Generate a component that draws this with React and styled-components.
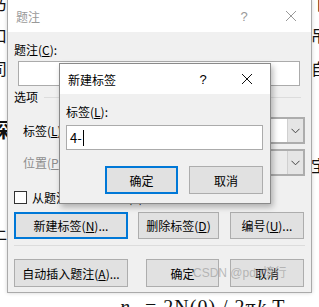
import React from "react";
import styled, { createGlobalStyle } from "styled-components";

const GlobalStyle = createGlobalStyle`
  html, body {
    margin: 0;
    padding: 0;
    background: #ffffff;
    overflow: hidden;
  }
  * {
    box-sizing: border-box;
  }
`;

const UI_FONT = `"Noto Sans CJK SC", "Microsoft YaHei", sans-serif`;

const Page = styled.div`
  position: relative;
  width: 319px;
  height: 307px;
  overflow: hidden;
  background: #ffffff;
`;

/* document behind the dialogs: only the edges peek out */
const Doc = styled.div`
  display: flex;
  flex-direction: column;
  width: 336px;
  margin: -7px 0 0 -9px;
  font-family: "Noto Sans CJK SC", serif;
  color: #111;
`;

const DocLine = styled.div`
  flex: none;
  display: flex;
  justify-content: space-between;
  height: ${(p) => p.$h}px;
  margin-top: ${(p) => p.$mt || 0}px;
  font-size: ${(p) => p.$size || 16}px;
  font-weight: ${(p) => (p.$bold ? 700 : 400)};
  line-height: ${(p) => p.$h}px;
  white-space: nowrap;
`;

const MathLine = styled.div`
  margin: 54px 0 0 129px;
  font-family: "Liberation Serif", serif;
  font-size: 20px;
  line-height: 22px;
  white-space: nowrap;
  letter-spacing: 1px;
`;

/* dialog pieces */
const Window = styled.div`
  position: absolute;
  z-index: ${(p) => p.$z};
  left: ${(p) => p.$left}px;
  top: ${(p) => p.$top}px;
  width: ${(p) => p.$w}px;
  height: ${(p) => p.$h}px;
  display: flex;
  flex-direction: column;
  background: #f0f0f0;
  border: 1px solid ${(p) => (p.$active ? "#8a8a8a" : "#aaaaaa")};
  box-shadow: ${(p) =>
    p.$active ? "2px 3px 6px rgba(0,0,0,0.28)" : "0 0 4px rgba(0,0,0,0.18)"};
  font-family: ${UI_FONT};
  font-size: 12px;
  color: #000;
`;

const TitleBar = styled.div`
  height: ${(p) => p.$h}px;
  flex: none;
  display: flex;
  align-items: center;
  background: #ffffff;
  padding-left: 8px;
  color: ${(p) => (p.$active ? "#000" : "#999")};
`;

const TitleText = styled.div`
  flex: 1;
  font-size: 12px;
`;

const TitleButton = styled.div`
  width: ${(p) => p.$w}px;
  margin-right: ${(p) => p.$mr || 0}px;
  display: flex;
  justify-content: center;
  align-items: center;
  font-family: "Liberation Sans", sans-serif;
  font-size: 13px;
`;

const Body = styled.div`
  flex: 1;
  display: flex;
  flex-direction: column;
  padding: 0 6px;
`;

const Label = styled.div`
  height: 16px;
  line-height: 16px;
  margin-top: ${(p) => p.$mt || 0}px;
  color: ${(p) => (p.$disabled ? "#8d8d8d" : "#000")};
  white-space: nowrap;
`;

const Underline = styled.span`
  text-decoration: underline;
`;

const TextBox = styled.div`
  height: 25px;
  margin: ${(p) => p.$m};
  flex: none;
  display: flex;
  align-items: center;
  padding-left: 3px;
  background: #ffffff;
  border: 1px solid #ababab;
  font-size: 13px;
`;

const Caret = styled.span`
  display: inline-block;
  width: 1px;
  height: 16px;
  background: #000;
  margin-left: 1px;
`;

const SectionRow = styled.div`
  display: flex;
  align-items: center;
  margin-top: 3px;
  height: 16px;
`;

const Rule = styled.div`
  flex: ${(p) => (p.$grow ? 1 : "none")};
  height: 1px;
  background: #dcdcdc;
  margin: ${(p) => p.$m || "0"};
`;

const FieldRow = styled.div`
  display: flex;
  align-items: center;
  height: 27px;
  margin-top: ${(p) => p.$mt}px;
`;

const FieldLabel = styled.div`
  width: 61px;
  padding-left: 9px;
  color: ${(p) => (p.$disabled ? "#8d8d8d" : "#000")};
`;

const Combo = styled.div`
  flex: 1;
  height: 27px;
  display: flex;
  border: 2px solid #adadad;
  background: ${(p) => (p.$disabled ? "#ececec" : "#ffffff")};
`;

const ComboField = styled.div`
  flex: 1;
`;

const ComboButton = styled.div`
  width: 16px;
  display: flex;
  align-items: center;
  justify-content: center;
  background: #e5e5e5;
  border-left: 1px solid #d0d0d0;
`;

const CheckRow = styled.div`
  display: flex;
  align-items: center;
  height: 13px;
  margin-top: 15px;
  gap: 5px;
`;

const CheckBox = styled.div`
  width: 13px;
  height: 13px;
  background: #fff;
  border: 1px solid #333;
`;

const ButtonRow = styled.div`
  display: flex;
  margin-top: ${(p) => p.$mt}px;
  margin-left: ${(p) => p.$ml || 0}px;
  height: ${(p) => p.$h}px;
`;

const Button = styled.div`
  width: ${(p) => p.$w}px;
  margin-left: ${(p) => p.$ml || 0}px;
  display: flex;
  align-items: center;
  justify-content: center;
  background: #e1e1e1;
  border: ${(p) => (p.$default ? "2px solid #0078d7" : "1px solid #adadad")};
  white-space: nowrap;
  font-size: 12px;
`;

const Watermark = styled.div`
  position: absolute;
  z-index: 3;
  left: 193px;
  top: 266px;
  font-family: "Liberation Sans", "Noto Sans CJK SC", sans-serif;
  font-size: 12px;
  line-height: 14px;
  color: rgba(160, 160, 160, 0.7);
  white-space: nowrap;
`;

const Chevron = () => (
  <svg width="9" height="6" viewBox="0 0 9 6">
    <path d="M0.5 0.8 L4.5 4.8 L8.5 0.8" fill="none" stroke="#444" strokeWidth="1" />
  </svg>
);

const CloseIcon = ({ color }) => (
  <svg width="12" height="12" viewBox="0 0 12 12">
    <path d="M1 1 L11 11 M11 1 L1 11" stroke={color} strokeWidth="1" />
  </svg>
);

const docLines = [
  { h: 20, mt: 0, left: "乃", right: "丨" },
  { h: 20, mt: 12, left: "口", right: "吊" },
  { h: 20, mt: 13, left: "司", right: "自" },
  { h: 26, mt: 39, left: "深", right: "", size: 20, bold: true },
  { h: 16, mt: 14, left: "", right: "宝" },
  { h: 16, mt: 2, left: "<", right: "" },
  { h: 20, mt: 31, left: "上", right: "" },
];

export default function App() {
  return (
    <Page>
      <GlobalStyle />
      <Doc>
        {docLines.map((l, i) => (
          <DocLine key={i} $h={l.h} $mt={l.mt} $size={l.size} $bold={l.bold}>
            <span>{l.left}</span>
            <span>{l.right}</span>
          </DocLine>
        ))}
        <MathLine>
          <i>n</i>₋ = 2N(0) / 2π<i>k</i> T
        </MathLine>
      </Doc>

      <Window $z={1} $left={7} $top={-1} $w={305} $h={294}>
        <TitleBar $h={32}>
          <TitleText>题注</TitleText>
          <TitleButton $w={20} $mr={17}>?</TitleButton>
          <TitleButton $w={40}>
            <CloseIcon color="#999" />
          </TitleButton>
        </TitleBar>
        <Body>
          <Label $mt={10}>
            题注(<Underline>C</Underline>):
          </Label>
          <TextBox $m="3px 5px 0 4px" />
          <SectionRow>
            <Label>选项</Label>
            <Rule $grow $m="0 4px 0 6px" />
          </SectionRow>
          <FieldRow $mt={12}>
            <FieldLabel>
              标签(<Underline>L</Underline>):
            </FieldLabel>
            <Combo>
              <ComboField />
              <ComboButton>
                <Chevron />
              </ComboButton>
            </Combo>
          </FieldRow>
          <FieldRow $mt={5}>
            <FieldLabel $disabled>
              位置(<Underline>P</Underline>):
            </FieldLabel>
            <Combo $disabled>
              <ComboField />
              <ComboButton>
                <Chevron />
              </ComboButton>
            </Combo>
          </FieldRow>
          <CheckRow>
            <CheckBox />
            <Label>从题注中排除标签(E)</Label>
          </CheckRow>
          <ButtonRow $mt={8} $h={27}>
            <Button $w={114} $default>
              新建标签(<Underline>N</Underline>)...
            </Button>
            <Button $w={81} $ml={10}>
              删除标签(<Underline>D</Underline>)
            </Button>
            <Button $w={74} $ml={11}>
              编号(<Underline>U</Underline>)...
            </Button>
          </ButtonRow>
          <Rule $m="6px 0 0 0" />
          <ButtonRow $mt={13} $h={28}>
            <Button $w={114}>
              自动插入题注(<Underline>A</Underline>)...
            </Button>
            <Button $w={73} $ml={18}>确定</Button>
            <Button $w={74} $ml={11}>取消</Button>
          </ButtonRow>
        </Body>
      </Window>

      <Window $z={2} $left={59} $top={63} $w={212} $h={141} $active>
        <TitleBar $h={30} $active>
          <TitleText>新建标签</TitleText>
          <TitleButton $w={20} $mr={11}>?</TitleButton>
          <TitleButton $w={46}>
            <CloseIcon color="#111" />
          </TitleButton>
        </TitleBar>
        <Body>
          <Label $mt={10}>
            标签(<Underline>L</Underline>):
          </Label>
          <TextBox $m="5px 1px 0 0">
            4-
            <Caret />
          </TextBox>
          <ButtonRow $mt={16} $h={28} $ml={39}>
            <Button $w={73} $default>确定</Button>
            <Button $w={74} $ml={11}>取消</Button>
          </ButtonRow>
        </Body>
      </Window>

      <Watermark>CSDN @pdn慎行</Watermark>
    </Page>
  );
}
